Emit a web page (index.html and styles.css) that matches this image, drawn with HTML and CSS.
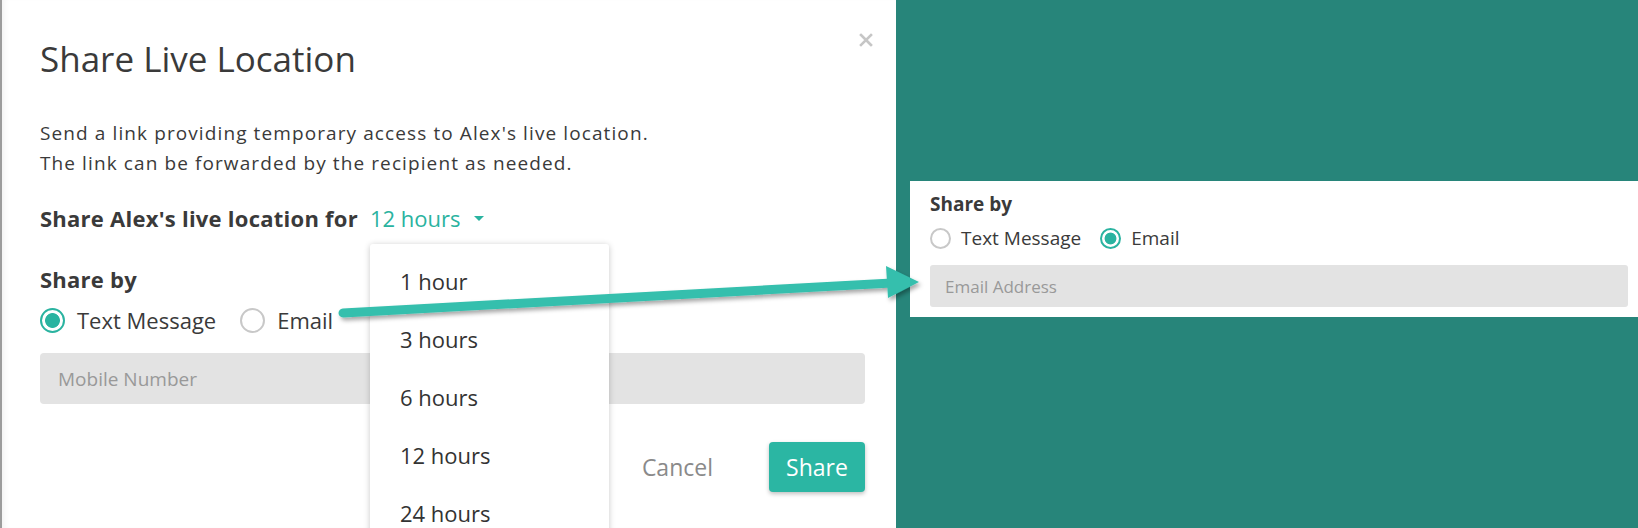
FILE: index.html
```html
<!DOCTYPE html>
<html lang="en">
<head>
<meta charset="utf-8">
<title>Share Live Location</title>
<link rel="stylesheet" href="styles.css">
</head>
<body>
<div class="page">
  <section class="dialog">
    <svg class="close" width="14" height="14" viewBox="0 0 14 14" aria-label="Close">
      <path d="M2 2 L12 12 M12 2 L2 12" stroke="#c6c6c6" stroke-width="2.6" stroke-linecap="square"/>
    </svg>
    <h1 class="title">Share Live Location</h1>
    <p class="desc">Send a link providing temporary access to Alex's live location.<br>The link can be forwarded by the recipient as needed.</p>
    <div class="duration">
      <span class="duration-label">Share Alex's live location for</span>
      <span class="dd">12 hours <span class="caret"></span></span>
      <ul class="menu">
        <li>1 hour</li>
        <li>3 hours</li>
        <li>6 hours</li>
        <li>12 hours</li>
        <li>24 hours</li>
      </ul>
    </div>
    <div class="share-by">Share by</div>
    <div class="radios">
      <label class="radio"><span class="dot on"></span>Text Message</label>
      <label class="radio"><span class="dot"></span>Email</label>
    </div>
    <div class="field">Mobile Number</div>
    <div class="actions">
      <span class="cancel">Cancel</span>
      <span class="btn">Share</span>
    </div>
  </section>
  <section class="stage">
    <div class="card">
      <div class="card-by">Share by</div>
      <div class="card-radios">
        <label class="radio small"><span class="dot"></span>Text Message</label>
        <label class="radio small"><span class="dot on"></span>Email</label>
      </div>
      <div class="card-field">Email Address</div>
    </div>
  </section>
  <svg class="arrow" width="1638" height="528" viewBox="0 0 1638 528">
    <defs>
      <filter id="sh" x="-10%" y="-50%" width="120%" height="200%">
        <feDropShadow dx="2" dy="3" stdDeviation="2" flood-color="#000" flood-opacity="0.35"/>
      </filter>
    </defs>
    <g filter="url(#sh)" fill="#35bfad" stroke="#35bfad">
      <line x1="343" y1="313" x2="892" y2="283" stroke-width="9" stroke-linecap="round"/>
      <polygon points="886,266 919,282 888,298" stroke="none"/>
    </g>
  </svg>
</div>
</body>
</html>
```

FILE: styles.css
```css
* { box-sizing: border-box; }
html, body { margin: 0; padding: 0; }
body {
  width: 1638px;
  height: 528px;
  overflow: hidden;
  font-family: "Open Sans", "Noto Sans", sans-serif;
  color: #3a3a3a;
  background: #fff;
}
.page {
  position: relative;
  display: flex;
  width: 1638px;
  height: 528px;
}
.dialog {
  position: relative;
  width: 896px;
  flex: none;
  background: #fff;
  border-left: 2px solid #9c9c9c;
  padding: 35px 0 0 38px;
  box-shadow: inset 6px 0 6px -4px rgba(0,0,0,0.06);
}
.close {
  position: absolute;
  top: 33px;
  left: 857px;
}
.title {
  margin: 0;
  font-size: 35px;
  font-weight: 400;
  line-height: 48px;
  color: #3a3a3a;
}
.desc {
  margin: 35px 0 0;
  font-size: 19px;
  letter-spacing: 1.1px;
  line-height: 30px;
}
.duration {
  position: relative;
  margin-top: 25px;
  display: flex;
  align-items: center;
  gap: 12px;
  font-size: 22px;
  line-height: 30px;
}
.duration-label { font-weight: 700; letter-spacing: 0.25px; }
.dd {
  color: #2ab3a0;
  display: inline-flex;
  align-items: center;
  gap: 13px;
}
.caret {
  width: 0;
  height: 0;
  border-left: 5px solid transparent;
  border-right: 5px solid transparent;
  border-top: 5px solid #2ab3a0;
}
.menu {
  position: absolute;
  left: 330px;
  top: 41px;
  width: 239px;
  height: 300px;
  margin: 0;
  padding: 8px 0 0 30px;
  list-style: none;
  background: #fff;
  box-shadow: 0 1px 6px rgba(0,0,0,0.22);
  border-radius: 3px;
  z-index: 2;
}
.menu li {
  font-size: 22px;
  line-height: 58px;
  color: #333;
}
.share-by {
  margin-top: 32px;
  font-size: 22px;
  letter-spacing: 0.25px;
  font-weight: 700;
  line-height: 28px;
}
.radios {
  display: flex;
  gap: 24px;
  margin-top: 12px;
}
.radio {
  display: flex;
  align-items: center;
  gap: 12px;
  font-size: 22px;
  line-height: 30px;
}
.dot {
  width: 25px;
  height: 25px;
  border-radius: 50%;
  border: 2px solid #c8c8c8;
  background: #fff;
  flex: none;
}
.dot.on {
  border: 2px solid #2ab3a0;
  background: radial-gradient(circle, #2ab3a0 0 7px, #fff 7.8px);
}
.field {
  margin-top: 18px;
  width: 825px;
  height: 51px;
  background: #e3e3e3;
  border-radius: 4px;
  padding: 0 18px;
  display: flex;
  align-items: center;
  font-size: 19px;
  color: #999;
}
.actions {
  display: flex;
  justify-content: flex-end;
  align-items: center;
  width: 825px;
  margin-top: 38px;
  gap: 56px;
}
.cancel {
  font-size: 23px;
  color: #8a8a8a;
}
.btn {
  width: 96px;
  height: 50px;
  border-radius: 4px;
  background: #2bb6a3;
  color: #fff;
  font-size: 23px;
  display: flex;
  align-items: center;
  justify-content: center;
  box-shadow: 0 2px 4px rgba(0,0,0,0.25);
}
.stage {
  flex: 1;
  background: #27857a;
  padding: 181px 0 0 14px;
}
.card {
  background: #fff;
  height: 136px;
  padding: 10px 10px 0 20px;
}
.card-by {
  font-size: 19px;
  font-weight: 700;
  line-height: 26px;
}
.card-radios {
  display: flex;
  gap: 19px;
  margin-top: 8px;
}
.radio.small {
  font-size: 19px;
  gap: 10px;
  line-height: 26px;
}
.radio.small .dot {
  width: 21px;
  height: 21px;
}
.radio.small .dot.on {
  background: radial-gradient(circle, #2ab3a0 0 5.5px, #fff 6.3px);
}
.card-field {
  margin-top: 14px;
  height: 42px;
  width: 698px;
  background: #e3e3e3;
  border-radius: 3px;
  padding: 0 15px;
  display: flex;
  align-items: center;
  font-size: 17px;
  color: #999;
}
.arrow {
  position: absolute;
  left: 0;
  top: 0;
  pointer-events: none;
  z-index: 5;
}
```
